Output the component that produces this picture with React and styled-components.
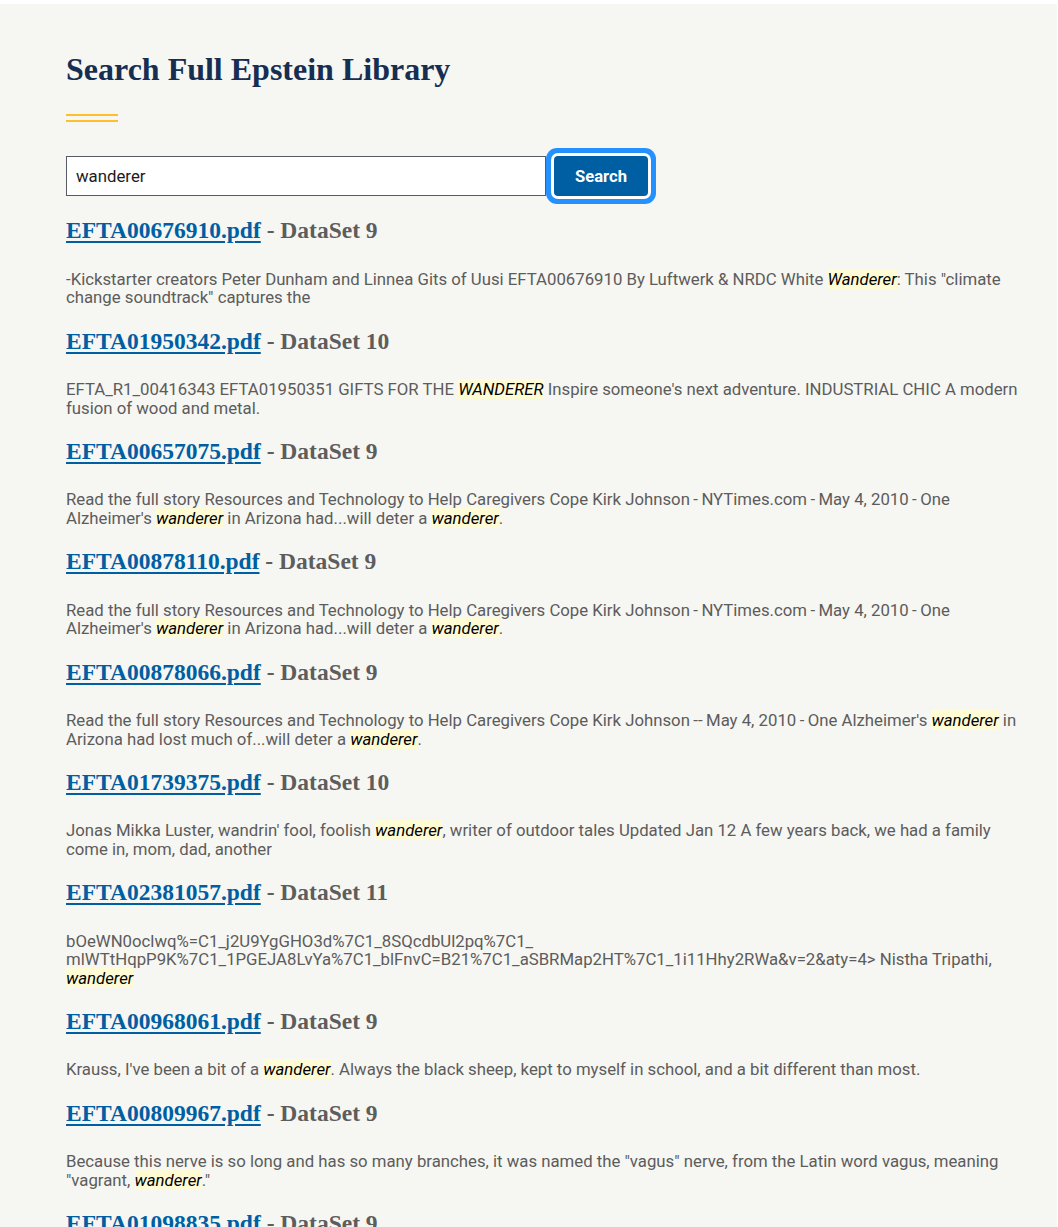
import React from "react";
import styled, { createGlobalStyle } from "styled-components";

const Global = createGlobalStyle`
  html, body { margin: 0; padding: 0; background: #ffffff; }
  body { font-family: Roboto, "Liberation Sans", Arial, sans-serif; }
  * { box-sizing: border-box; }
`;

const Page = styled.main`
  margin: 4px 1px 0 0;
  background: #f6f6f2;
  padding: 46px 38px 40px 66px;
  min-height: 1223px;
`;

const Title = styled.h1`
  margin: 0;
  font-family: "Liberation Serif", "Times New Roman", serif;
  font-weight: 700;
  font-size: 32px;
  line-height: 1.2;
  color: #162e51;
`;

const GoldRule = styled.div`
  width: 52px;
  height: 8px;
  margin-top: 26px;
  border-top: 2px solid #ffbe2e;
  border-bottom: 2px solid #ffbe2e;
`;

const SearchForm = styled.form`
  display: flex;
  align-items: center;
  gap: 8px;
  margin-top: 34px;
`;

const SearchInput = styled.input`
  width: 480px;
  height: 40px;
  border: 1px solid #565c65;
  background: #ffffff;
  padding: 0 9px;
  font-family: Roboto, "Liberation Sans", Arial, sans-serif;
  font-size: 16.8px;
  color: #1b1b1b;
  outline: none;
`;

const SearchButton = styled.button`
  width: 94px;
  height: 40px;
  padding: 0;
  border: none;
  border-radius: 4px;
  background: #005ea2;
  color: #ffffff;
  font-family: Roboto, "Liberation Sans", Arial, sans-serif;
  font-weight: 700;
  font-size: 16.6px;
  box-shadow: 0 0 0 3px #ffffff, 0 0 0 8px #2491ff;
  cursor: pointer;
`;

const Results = styled.section`
  margin-top: 20px;
`;

const ResultTitle = styled.h2`
  margin: 0 0 25.5px;
  font-family: "Liberation Serif", "Times New Roman", serif;
  font-weight: 700;
  font-size: 23.5px;
  line-height: 28px;
  color: #5d5d5d;
`;

const FileLink = styled.a`
  color: #005ea2;
  text-decoration: underline;
  text-decoration-thickness: 2px;
  text-underline-offset: 3px;
`;

const Snippet = styled.p`
  margin: 0 0 19.8px;
  font-family: Roboto, "Liberation Sans", Arial, sans-serif;
  font-size: 16.75px;
  line-height: 18.5px;
  color: #5c5c5c;
  overflow-wrap: anywhere;
`;

const Hit = styled.mark`
  background: #fffbd5;
  color: #000000;
  font-style: italic;
`;

const T = "\u2009";

const results = [
  {
    file: "EFTA00676910.pdf",
    set: 9,
    parts: [
      "-Kickstarter creators Peter Dunham and Linnea Gits of Uusi EFTA00676910 By Luftwerk & NRDC White ",
      { hit: "Wanderer" },
      ': This "climate change soundtrack" captures the',
    ],
  },
  {
    file: "EFTA01950342.pdf",
    set: 10,
    parts: [
      "EFTA_R1_00416343 EFTA01950351 GIFTS FOR THE ",
      { hit: "WANDERER" },
      " Inspire someone's next adventure. INDUSTRIAL CHIC A modern fusion of wood and metal.",
    ],
  },
  {
    file: "EFTA00657075.pdf",
    set: 9,
    parts: [
      `Read the full story Resources and Technology to Help Caregivers Cope Kirk Johnson${T}-${T}NYTimes.com${T}-${T}May 4, 2010${T}-${T}One Alzheimer's `,
      { hit: "wanderer" },
      " in Arizona had...will deter a ",
      { hit: "wanderer" },
      ".",
    ],
  },
  {
    file: "EFTA00878110.pdf",
    set: 9,
    parts: [
      `Read the full story Resources and Technology to Help Caregivers Cope Kirk Johnson${T}-${T}NYTimes.com${T}-${T}May 4, 2010${T}-${T}One Alzheimer's `,
      { hit: "wanderer" },
      " in Arizona had...will deter a ",
      { hit: "wanderer" },
      ".",
    ],
  },
  {
    file: "EFTA00878066.pdf",
    set: 9,
    parts: [
      `Read the full story Resources and Technology to Help Caregivers Cope Kirk Johnson${T}--${T}May 4, 2010${T}-${T}One Alzheimer's `,
      { hit: "wanderer" },
      " in Arizona had lost much of...will deter a ",
      { hit: "wanderer" },
      ".",
    ],
  },
  {
    file: "EFTA01739375.pdf",
    set: 10,
    parts: [
      "Jonas Mikka Luster, wandrin' fool, foolish ",
      { hit: "wanderer" },
      ", writer of outdoor tales Updated Jan 12 A few years back, we had a family come in, mom, dad, another",
    ],
  },
  {
    file: "EFTA02381057.pdf",
    set: 11,
    parts: [
      "bOeWN0oclwq%=C1_j2U9YgGHO3d%7C1_8SQcdbUl2pq%7C1_ mlWTtHqpP9K%7C1_1PGEJA8LvYa%7C1_blFnvC=B21%7C1_aSBRMap2HT%7C1_1i11Hhy2RWa&v=2&aty=4> Nistha Tripathi, ",
      { hit: "wanderer" },
    ],
  },
  {
    file: "EFTA00968061.pdf",
    set: 9,
    parts: [
      "Krauss, I've been a bit of a ",
      { hit: "wanderer" },
      ". Always the black sheep, kept to myself in school, and a bit different than most.",
    ],
  },
  {
    file: "EFTA00809967.pdf",
    set: 9,
    parts: [
      'Because this nerve is so long and has so many branches, it was named the "vagus" nerve, from the Latin word vagus, meaning "vagrant, ',
      { hit: "wanderer" },
      '."',
    ],
  },
  {
    file: "EFTA01098835.pdf",
    set: 9,
    parts: ["A restless ", { hit: "wanderer" }, "."],
  },
];

export default function App() {
  return (
    <>
      <Global />
      <Page>
        <Title>Search Full Epstein Library</Title>
        <GoldRule />
        <SearchForm onSubmit={(e) => e.preventDefault()}>
          <SearchInput type="text" defaultValue="wanderer" aria-label="Search" />
          <SearchButton type="submit">Search</SearchButton>
        </SearchForm>
        <Results>
          {results.map((r) => (
            <div key={r.file}>
              <ResultTitle>
                <FileLink href="#">{r.file}</FileLink> - DataSet {r.set}
              </ResultTitle>
              <Snippet>
                {r.parts.map((p, i) =>
                  typeof p === "string" ? p : <Hit key={i}>{p.hit}</Hit>
                )}
              </Snippet>
            </div>
          ))}
        </Results>
      </Page>
    </>
  );
}
